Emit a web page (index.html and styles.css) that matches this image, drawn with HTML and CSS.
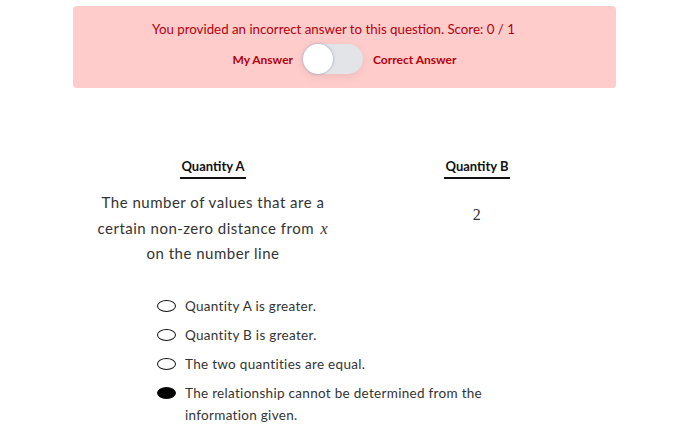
FILE: index.html
```html
<!DOCTYPE html>
<html>
<head>
<meta charset="utf-8">
<link rel="stylesheet" href="styles.css">
</head>
<body>
<div class="banner">
  <div class="banner-title">You provided an incorrect answer to this question. Score: 0 / 1</div>
  <div class="toggle-row">
    <span class="toggle-label">My Answer</span>
    <span class="switch"><span class="knob"></span></span>
    <span class="toggle-label">Correct Answer</span>
  </div>
</div>
<div class="quantities">
  <div class="qcol">
    <div class="qhead">Quantity A</div>
    <div class="qbody">The number of values that are a certain non-zero distance from <span class="math">x</span> on the number line</div>
  </div>
  <div class="qcol">
    <div class="qhead">Quantity B</div>
    <div class="qbody qnum"><span class="num">2</span></div>
  </div>
</div>
<ul class="options">
  <li class="option"><span class="radio"></span><span class="opt-text">Quantity A is greater.</span></li>
  <li class="option"><span class="radio"></span><span class="opt-text">Quantity B is greater.</span></li>
  <li class="option"><span class="radio"></span><span class="opt-text">The two quantities are equal.</span></li>
  <li class="option"><span class="radio selected"></span><span class="opt-text">The relationship cannot be determined from the information given.</span></li>
</ul>
</body>
</html>
```
FILE: styles.css
```css
html, body {
  margin: 0;
  padding: 0;
  background: #ffffff;
}
body {
  font-family: "Lato", "Noto Sans", sans-serif;
  color: #333333;
  width: 690px;
}
.banner {
  box-sizing: border-box;
  width: 543px;
  height: 82px;
  margin: 6px 0 0 73px;
  background: #ffcccc;
  border-radius: 4px;
  display: flex;
  flex-direction: column;
  align-items: center;
  padding-top: 14px;
  color: #b3000c;
}
.banner-title {
  font-size: 13.3px;
  line-height: 18px;
  letter-spacing: 0;
  margin-right: 22px;
}
.toggle-row {
  display: flex;
  align-items: center;
  margin-top: 6px;
  gap: 10px;
  font-size: 12px;
  font-weight: bold;
}
.switch {
  position: relative;
  width: 60px;
  height: 30px;
  border-radius: 15px;
  background: #e3e4e8;
  box-shadow: 0 3px 8px rgba(120, 80, 80, 0.12);
}
.knob {
  position: absolute;
  left: 0;
  top: 0;
  width: 30px;
  height: 30px;
  border-radius: 50%;
  background: #ffffff;
  box-shadow: 0 0 2px 1px rgba(150, 170, 190, 0.55);
}
.quantities {
  display: grid;
  grid-template-columns: 264px 264px;
  margin: 69px 0 0 81px;
}
.qcol {
  display: flex;
  flex-direction: column;
  align-items: center;
}
.qhead {
  font-size: 13px;
  font-weight: bold;
  color: #111111;
  line-height: 18px;
  padding: 0 1px 2px;
  border-bottom: 2px solid #111111;
}
.qbody {
  margin-top: 11px;
  font-size: 15px;
  line-height: 25.5px;
  letter-spacing: 0.5px;
  text-align: center;
  width: 250px;
  color: #333333;
}
.math {
  display: inline-block;
  font-family: "Liberation Serif", "DejaVu Serif", serif;
  font-style: italic;
  font-size: 16px;
  letter-spacing: 0;
  padding: 0 1px 0 2px;
}
.qnum {
  margin-top: 23px;
}
.num {
  font-family: "Liberation Serif", "DejaVu Serif", serif;
  font-size: 16px;
}
.options {
  list-style: none;
  margin: 28px 0 0 157px;
  padding: 0;
  width: 340px;
}
.option {
  display: flex;
  align-items: flex-start;
  font-size: 13.5px;
  line-height: 22px;
  letter-spacing: 0.3px;
  margin-bottom: 7px;
  color: #333333;
}
.radio {
  flex: none;
  box-sizing: border-box;
  width: 19px;
  height: 12px;
  border: 1.5px solid #111111;
  border-radius: 50%;
  margin-top: 5px;
  margin-right: 9px;
}
.radio.selected {
  background: #000000;
}
```
